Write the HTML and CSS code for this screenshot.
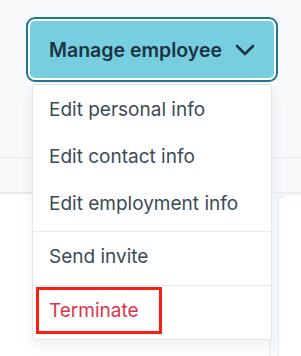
FILE: index.html
```html
<!DOCTYPE html>
<html lang="en">

<head>
    <meta charset="UTF-8">
    <meta name="viewport" content="width=device-width, initial-scale=1.0">
    <title>Manage employee</title>
    <link rel="stylesheet" href="styles.css">
</head>

<body>
    <div class="toolbar">
        <div class="dropdown">
            <button class="dropdown-toggle" type="button">
                Manage employee
                <svg class="chevron" width="20" height="12" viewBox="0 0 20 12">
                    <path d="M2 2 L10 10 L18 2" fill="none" stroke="currentColor" stroke-width="2.6" stroke-linecap="round" stroke-linejoin="round"/>
                </svg>
            </button>

            <!-- open menu -->
            <div class="menu">
                <div class="menu-group">
                    <div class="menu-item">Edit personal info</div>
                    <div class="menu-item">Edit contact info</div>
                    <div class="menu-item">Edit employment info</div>
                </div>
                <div class="menu-group">
                    <div class="menu-item">Send invite</div>
                </div>
                <div class="menu-group">
                    <div class="menu-item danger">Terminate</div>
                    <div class="highlight"></div>
                </div>
            </div>
        </div>
    </div>

    <div class="tabs"></div>

    <div class="cards">
        <div class="card card-main"></div>
        <div class="card card-side"></div>
    </div>
</body>

</html>
```

FILE: styles.css
```css
html,
body {
    overflow: hidden;
}

body {
    margin: 0;
    padding: 0;
    background-color: #f7f9fb;
    font-family: Inter, "Noto Sans", sans-serif;
    height: 356px;
}

.toolbar {
    padding: 21px 0 0 30px;
    height: 136px;
    border-bottom: 1px solid #e6ebef;
}

.dropdown {
    position: relative;
    width: 244px;
}

.dropdown-toggle {
    display: flex;
    align-items: center;
    justify-content: space-between;
    width: 244px;
    height: 57px;
    padding: 0 19px 0 19px;
    border: 0;
    border-radius: 5px;
    background-color: #76cedf;
    color: #1b3443;
    font-family: inherit;
    font-size: 19.5px;
    font-weight: 600;
    box-shadow: 0 0 0 2px #fff, 0 0 0 4px #1f7891;
}

.chevron {
    display: block;
}

/* 下拉菜单 */
.menu {
    position: absolute;
    top: 63px;
    left: 2px;
    width: 238px;
    background: #fff;
    border: 1px solid #e0e6eb;
    border-radius: 4px;
    box-shadow: 0 6px 14px rgba(40, 60, 80, 0.08);
    z-index: 10;
}

.menu-group {
    position: relative;
    padding: 3px 0 2px;
}

.menu-group + .menu-group {
    border-top: 1px solid #e6ebef;
    padding: 3px 0;
}

.menu-item {
    height: 47px;
    line-height: 44px;
    padding-left: 16px;
    font-size: 19px;
    color: #3a4b57;
}

.menu-item.danger {
    color: #e0344c;
}

.highlight {
    position: absolute;
    top: 1px;
    left: 3px;
    width: 120px;
    height: 41px;
    border: 3px solid #ff1e0e;
}

.tabs {
    height: 34px;
    border-bottom: 1px solid #e6ebef;
}

.cards {
    display: flex;
    gap: 8px;
}

.card {
    height: 170px;
    background: #fff;
    border: 1px solid #e6ebef;
    border-left: 0;
}

.card-main {
    flex: 1;
}

.card-side {
    width: 22px;
    margin-top: 1px;
    border-right: 0;
    border-left: 1px solid #e6ebef;
    border-radius: 8px 0 0 8px;
}
```
